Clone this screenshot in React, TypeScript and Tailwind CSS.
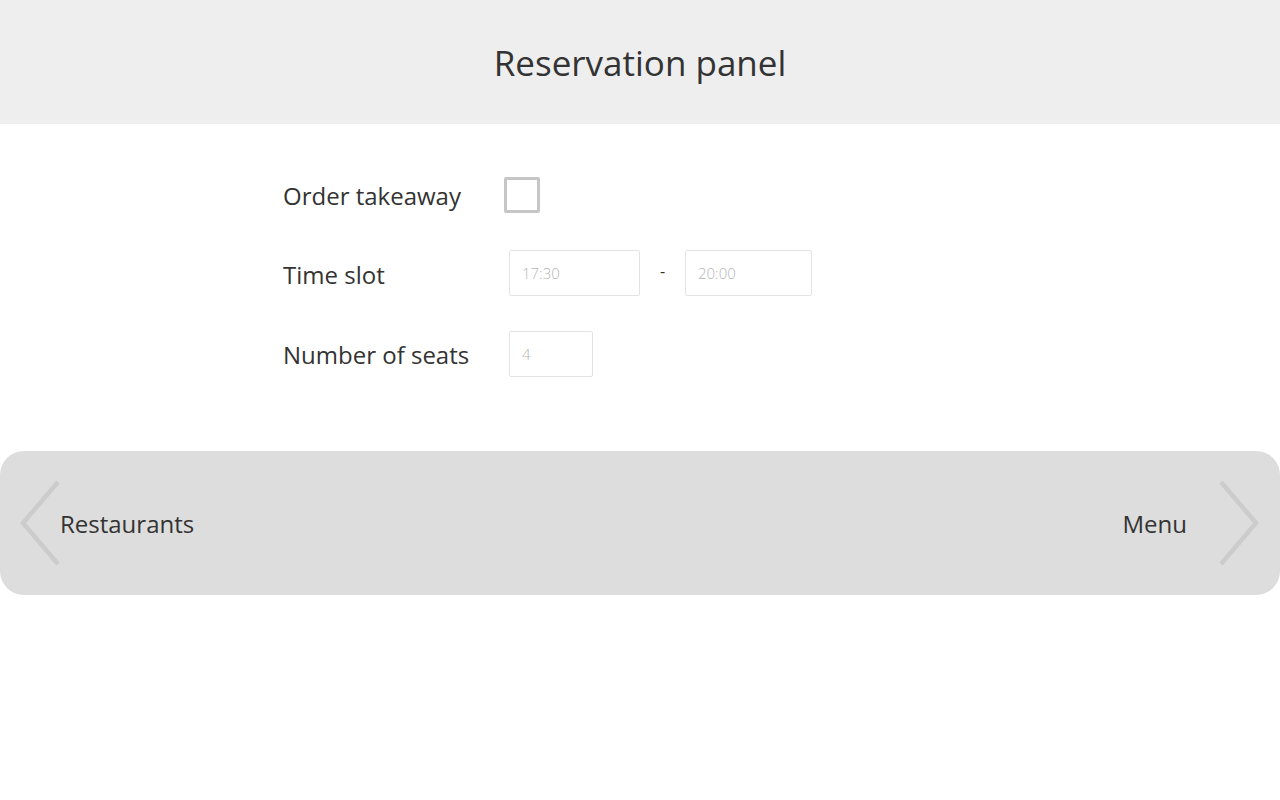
import React from "react";

function Chevron({ dir }: { dir: "left" | "right" }) {
  const left = dir === "left";
  return (
    <svg width={left ? 40 : 42} height="90" viewBox={left ? "0 0 40 90" : "0 0 42 90"} className="shrink-0">
      <polyline
        points={left ? "38,4 3,45 38,86" : "3,4 38,45 3,86"}
        fill="none"
        stroke="#cccccc"
        strokeWidth="4.5"
      />
    </svg>
  );
}

function Field({ value, width }: { value: string; width: string }) {
  return (
    <input
      readOnly
      placeholder={value}
      className={`h-[46px] ${width} rounded-[2px] border border-[#e3e3e3] bg-white px-3 text-[15px] font-light text-[#333] outline-none placeholder:text-[#b5b5b5]`}
    />
  );
}

export default function App() {
  return (
    <div className="min-h-[800px] bg-white font-['Open_Sans',sans-serif] text-[#333]">
      <header className="flex h-[124px] items-center justify-center bg-[#eeeeee]">
        <h1 className="text-[35px] leading-none">Reservation panel</h1>
      </header>

      <div className="mx-auto w-[714px] pt-[53px]">
        <div className="flex h-[36px] items-center">
          <span className="mt-[1px] w-[221px] text-[24px]">Order takeaway</span>
          <span className="h-[36px] w-[36px] rounded-[2px] border-[3px] border-[#c6c6c6] bg-white" />
        </div>

        <div className="mt-[37px] flex h-[46px] items-center">
          <span className="mt-[3px] w-[226px] text-[24px]">Time slot</span>
          <Field value="17:30" width="w-[131px]" />
          <span className="mb-[4px] w-[45px] text-center text-[16px]">-</span>
          <Field value="20:00" width="w-[127px]" />
        </div>

        <div className="mt-[35px] flex h-[46px] items-center">
          <span className="mt-[2px] w-[226px] text-[24px]">Number of seats</span>
          <Field value="4" width="w-[84px]" />
        </div>
      </div>

      <nav className="mt-[74px] flex h-[144px] items-center justify-between rounded-[24px] bg-[#dddddd] px-[20px]">
        <div className="flex items-center">
          <Chevron dir="left" />
          <span className="mt-[2px] text-[24px]">Restaurants</span>
        </div>
        <div className="flex items-center">
          <span className="mt-[2px] mr-[31px] text-[24px]">Menu</span>
          <Chevron dir="right" />
        </div>
      </nav>
    </div>
  );
}
